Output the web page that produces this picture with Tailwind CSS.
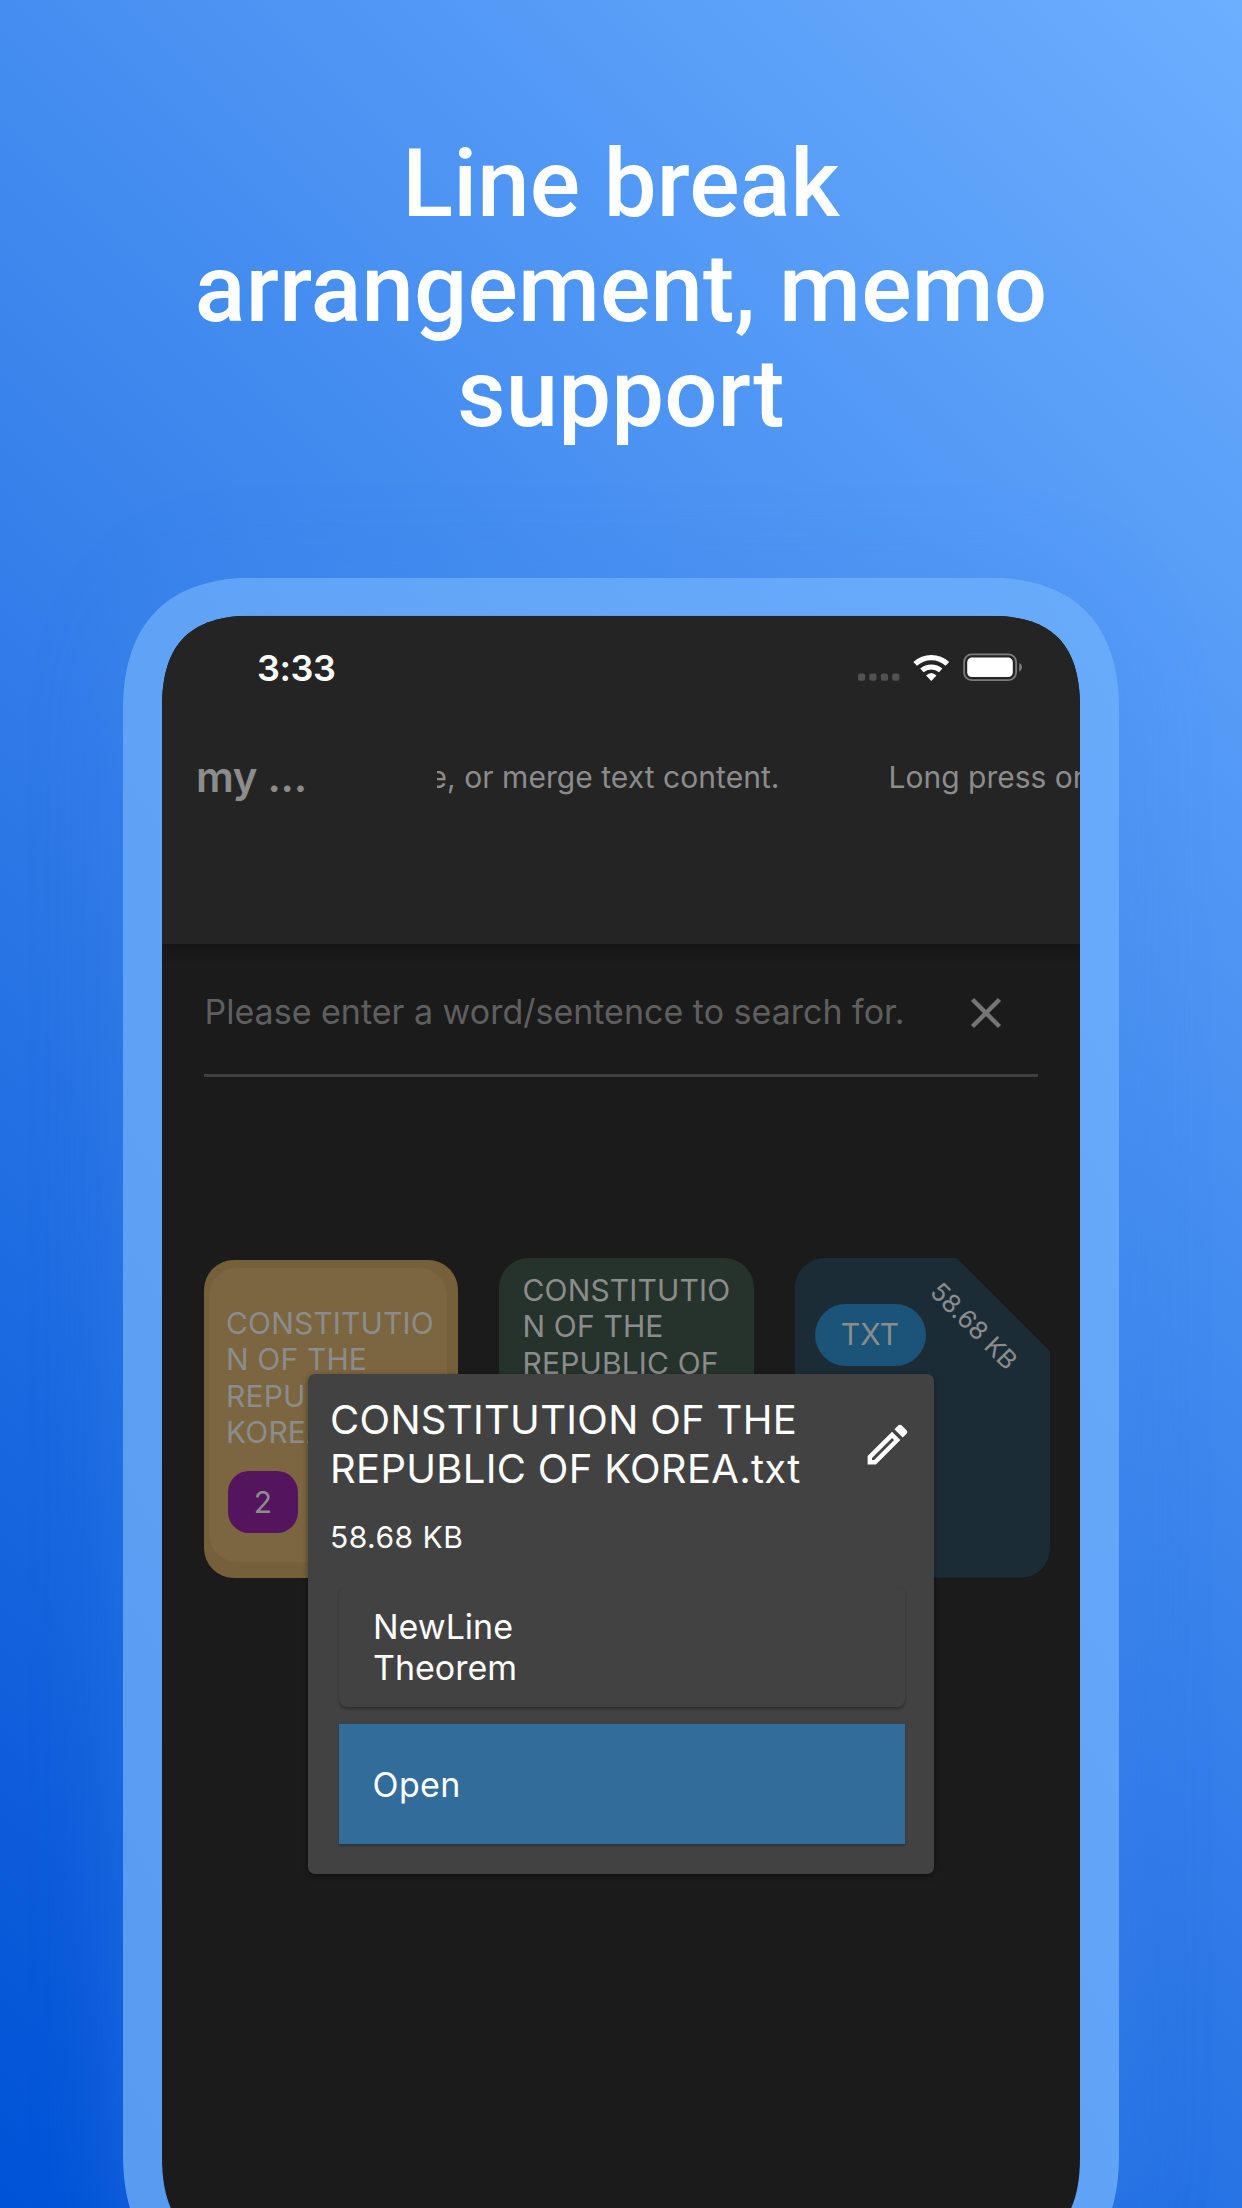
<!DOCTYPE html>
<html lang="en">
<head>
<meta charset="utf-8">
<title>Line break arrangement, memo support</title>
<script src="https://cdn.jsdelivr.net/npm/@tailwindcss/browser@4"></script>
</head>
<body class="font-[Inter,sans-serif]">
<main class="relative flex h-[2208px] w-[1242px] flex-col items-center overflow-hidden bg-linear-[45deg] from-[#0052d6] to-[#6cafff]">
  <h1 class="pt-[132px] text-center font-[Roboto,sans-serif] text-[94px] leading-[105px] font-medium tracking-[0.15px] text-white">Line break<br>arrangement, memo<br>support</h1>

  <!-- phone -->
  <div class="mt-[130.6px] h-[1710px] w-[996px] shrink-0 rounded-[118px] shadow-[0_0_90px_rgba(70,140,240,0.3)]">
    <div class="h-[1710px] bg-linear-to-bl from-[#69abfb] to-[#579bf1] px-[39px] pt-[38px] [clip-path:path('M0_132C0_45_45_0_132_0H864C951_0_996_45_996_132V1578C996_1665_951_1710_864_1710H132C45_1710_0_1665_0_1578Z')]">
      <div class="relative h-[1634px] bg-[#1b1b1b] [clip-path:path('M0_92C0_28_28_0_92_0H826C890_0_918_28_918_92V1542C918_1606_890_1634_826_1634H92C28_1634_0_1606_0_1542Z')]">

        <header class="relative h-[328.5px] bg-[#242424] pt-[30px] shadow-[0_4px_12px_rgba(0,0,0,0.35)]">
          <div class="flex items-start pl-[95px]">
            <span class="text-[36px] leading-[44px] font-semibold tracking-[-0.4px] text-white">3:33</span>
            <svg class="mt-[5.5px] ml-auto mr-[57px] shrink-0" width="166" height="32" viewBox="0 0 166 32">
              <g fill="#525252"><rect x="1" y="22.5" width="7.2" height="7.2" rx="2"/><rect x="12.3" y="22.5" width="7.2" height="7.2" rx="2"/><rect x="23.8" y="22.5" width="7.2" height="7.2" rx="2"/><rect x="35.2" y="22.5" width="7.2" height="7.2" rx="2"/></g>
              <g fill="none" stroke="#fff"><path d="M58.2 12.8A23.8 23.8 0 0 1 90.4 12.8" stroke-width="5.2"/><path d="M64.9 19.4A14.3 14.3 0 0 1 83.7 19.4" stroke-width="5"/></g>
              <path d="M74.3 30L69.1 24.6Q74.3 19.6 79.5 24.6Z" fill="#fff"/>
              <rect x="107.1" y="3.4" width="52" height="25.8" rx="7.6" fill="none" stroke="#7b7b7b" stroke-width="1.8"/>
              <rect x="110.2" y="6.6" width="45.6" height="19.5" rx="4.6" fill="#fff"/>
              <path d="M162.2 12v8.5q2.7-1 2.7-4.25T162.2 12Z" fill="#7b7b7b"/>
            </svg>
          </div>
          <div class="mt-[62px] flex items-start pl-[34px] text-[#8c8c8c]">
            <span class="w-[241px] shrink-0 text-[42px] leading-[50px] font-semibold tracking-[-0.3px]">my ...</span>
            <div class="mt-[7px] flex w-[643px] gap-[109px] overflow-hidden text-[30px] leading-[36px] whitespace-nowrap">
              <span class="-ml-[7.5px] tracking-[0.05px]">e, or merge text content.</span>
              <span>Long press on</span>
            </div>
          </div>
        </header>

        <div class="mx-[42px] mt-[46.5px] flex h-[86px] items-start border-b-[3px] border-[#3f3f3f]">
          <span class="pl-[0.5px] text-[34px] leading-[41px] text-[#5f5f5f]">Please enter a word/sentence to search for.</span>
          <svg class="mt-[5px] ml-auto mr-[35px]" width="34" height="34" viewBox="0 0 34 34"><path d="M3.5 3.5L30.5 30.5M30.5 3.5L3.5 30.5" stroke="#757575" stroke-width="4.4"/></svg>
        </div>

        <section class="mt-[181px] flex gap-[41px] pl-[42px] text-[30px] leading-[36.6px] tracking-[0.15px] text-[#8c8c8c]">
          <article class="mt-[2px] h-[318px] w-[254px] rounded-[30px] bg-[#76603a] pt-[8px] pr-[11px] pb-[16px] pl-[5px]">
            <div class="h-full rounded-[28px] bg-[#7b6640] pt-[37px] pl-[17px] whitespace-nowrap">
              CONSTITUTIO<br>N OF THE<br>REPUBLIC OF<br>KOREA.txt
              <div class="mt-[20.5px] ml-[2px] flex h-[62px] w-[70px] items-center justify-center rounded-[21px] bg-[#54145e] pb-px">2</div>
            </div>
          </article>
          <article class="h-[320px] w-[255px] rounded-[30px] bg-[#26332c] pt-[14px] pl-[23.5px] whitespace-nowrap">CONSTITUTIO<br>N OF THE<br>REPUBLIC OF<br>KOREA.txt</article>
          <article class="relative h-[320px] w-[255px] rounded-[30px] bg-[#1c2c37] pt-[46px] pl-[20px] [clip-path:polygon(0_0,161px_0,255px_94px,255px_100%,0_100%)]">
            <div class="flex h-[62px] w-[111px] items-center justify-center rounded-full bg-[#1a5579] pr-px pb-px">TXT</div>
            <div class="absolute top-[53px] left-[119px] w-[120px] rotate-45 text-center text-[25.3px] leading-[30px]">58.68 KB</div>
          </article>
        </section>

        <!-- dialog over the file list -->
        <div class="absolute top-[758.5px] left-[146px] h-[499.5px] w-[626px] rounded-[7px] bg-[#424242] pt-[20.5px] text-white shadow-[0_2px_6px_rgba(0,0,0,0.4)]">
          <div class="flex items-start pl-[22px]">
            <h2 class="text-[40px] leading-[49.7px] tracking-[0.3px] whitespace-nowrap">CONSTITUTION OF THE<br>REPUBLIC OF KOREA.txt</h2>
            <svg class="mt-[23.5px] ml-auto mr-[20.5px]" width="53" height="53" viewBox="0 0 24 24" fill="#fff"><path d="M3 17.25V21h3.75L17.81 9.94l-3.75-3.75L3 17.25zM5.92 19H5v-.92l9.06-9.06.92.92L5.92 19zM20.71 5.63l-2.34-2.34c-.2-.2-.45-.29-.71-.29s-.51.1-.7.29l-1.83 1.83 3.75 3.75 1.83-1.83c.39-.39.39-1.02 0-1.41z"/></svg>
          </div>
          <p class="mt-[25px] pl-[22px] text-[30px] leading-[36px] tracking-[0.5px]">58.68 KB</p>
          <div class="mt-[32px] ml-[30.5px] flex h-[120px] w-[566px] items-center rounded-[8px] bg-[#424242] pl-[34.5px] text-[34px] leading-[41px] shadow-[0_2px_3px_rgba(0,0,0,0.3)]">NewLine<br>Theorem</div>
          <div class="mt-[17px] ml-[30.5px] flex h-[120px] w-[566px] items-center bg-[#326c9b] pl-[34px] text-[34px] leading-[41px] tracking-[0.4px] shadow-[0_2px_2px_rgba(0,0,0,0.25)]">Open</div>
        </div>
      </div>
    </div>
  </div>
</main>
</body>
</html>
